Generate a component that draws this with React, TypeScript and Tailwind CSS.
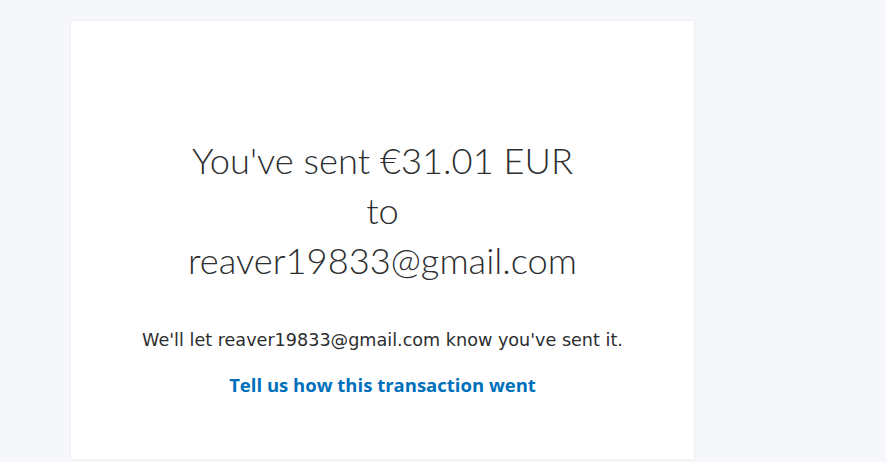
export default function App() {
  return (
    <div className="min-h-[462px] w-full bg-[#f5f7fa] pl-[71px] pt-[21px]">
      <div className="flex h-[438px] w-[623px] flex-col items-center bg-white pt-[114px] text-center shadow-[0_0_2px_rgba(0,0,0,0.08)]">
        <h1 className="font-['Lato',sans-serif] text-[36.3px] font-light leading-[50px] text-[#2c2e2f]">
          You've sent €31.01 EUR
          <br />
          to
          <br />
          reaver19833@gmail.com
        </h1>
        <p className="mt-[43px] font-['DejaVu_Sans',sans-serif] text-[17.6px] leading-[24px] text-[#2c2e2f]">
          We'll let reaver19833@gmail.com know you've sent it.
        </p>
        <a className="mt-[21px] font-['Open_Sans',sans-serif] text-[18.5px] font-bold leading-[24px] text-[#0070ba]">
          Tell us how this transaction went
        </a>
      </div>
    </div>
  );
}
